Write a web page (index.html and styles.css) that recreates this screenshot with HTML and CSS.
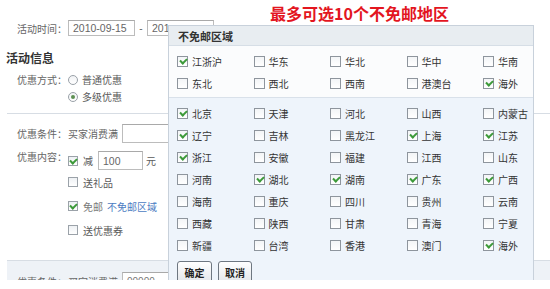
FILE: index.html
```html
<!DOCTYPE html>
<html lang="zh-CN">
<head>
<meta charset="utf-8">
<title>不免邮区域</title>
<link rel="stylesheet" href="styles.css">
</head>
<body>
<div class="shot">
  <div class="form">
    <div class="row date-row">
      <span class="label">活动时间：</span>
      <span class="input date">2010-09-15</span>
      <span class="dash">-</span>
      <span class="input date date-end">201</span>
    </div>
    <h3 class="title">活动信息</h3>
    <div class="row type-row">
      <span class="label">优惠方式：</span>
      <div class="options">
        <div class="opt"><span class="radio"></span>普通优惠</div>
        <div class="opt"><span class="radio on"></span>多级优惠</div>
      </div>
    </div>
    <div class="level">
      <div class="row cond">
        <span class="label">优惠条件：</span><span class="cond-text">买家消费满</span><span class="input amount"></span>
      </div>
      <div class="row content">
        <span class="label">优惠内容：</span>
        <div class="options">
          <div class="opt first"><span class="cb on"></span>减<span class="input small">100</span>元</div>
          <div class="opt"><span class="cb"></span>送礼品</div>
          <div class="opt"><span class="cb on"></span><span class="muted">免邮</span><a class="link">不免邮区域</a></div>
          <div class="opt"><span class="cb"></span>送优惠券</div>
        </div>
      </div>
    </div>
    <div class="level level2">
      <div class="row cond">
        <span class="label">优惠条件：</span><span class="cond-text">买家消费满</span><span class="input amount">00000</span>
      </div>
    </div>
  </div>

  <div class="note">最多可选10个不免邮地区</div>

  <div class="panel">
    <div class="panel-head">不免邮区域</div>
    <div class="grid areas">
      <label class="item"><span class="box on"></span>江浙沪</label>
      <label class="item"><span class="box"></span>华东</label>
      <label class="item"><span class="box"></span>华北</label>
      <label class="item"><span class="box"></span>华中</label>
      <label class="item"><span class="box"></span>华南</label>
      <label class="item"><span class="box"></span>东北</label>
      <label class="item"><span class="box"></span>西北</label>
      <label class="item"><span class="box"></span>西南</label>
      <label class="item"><span class="box"></span>港澳台</label>
      <label class="item"><span class="box on"></span>海外</label>
    </div>
    <div class="provinces">
      <div class="grid">
        <label class="item"><span class="box on"></span>北京</label>
        <label class="item"><span class="box"></span>天津</label>
        <label class="item"><span class="box"></span>河北</label>
        <label class="item"><span class="box"></span>山西</label>
        <label class="item"><span class="box"></span>内蒙古</label>
        <label class="item"><span class="box on"></span>辽宁</label>
        <label class="item"><span class="box"></span>吉林</label>
        <label class="item"><span class="box"></span>黑龙江</label>
        <label class="item"><span class="box on"></span>上海</label>
        <label class="item"><span class="box on"></span>江苏</label>
        <label class="item"><span class="box on"></span>浙江</label>
        <label class="item"><span class="box"></span>安徽</label>
        <label class="item"><span class="box"></span>福建</label>
        <label class="item"><span class="box"></span>江西</label>
        <label class="item"><span class="box"></span>山东</label>
        <label class="item"><span class="box"></span>河南</label>
        <label class="item"><span class="box on"></span>湖北</label>
        <label class="item"><span class="box on"></span>湖南</label>
        <label class="item"><span class="box on"></span>广东</label>
        <label class="item"><span class="box on"></span>广西</label>
        <label class="item"><span class="box"></span>海南</label>
        <label class="item"><span class="box"></span>重庆</label>
        <label class="item"><span class="box"></span>四川</label>
        <label class="item"><span class="box"></span>贵州</label>
        <label class="item"><span class="box"></span>云南</label>
        <label class="item"><span class="box"></span>西藏</label>
        <label class="item"><span class="box"></span>陕西</label>
        <label class="item"><span class="box"></span>甘肃</label>
        <label class="item"><span class="box"></span>青海</label>
        <label class="item"><span class="box"></span>宁夏</label>
        <label class="item"><span class="box"></span>新疆</label>
        <label class="item"><span class="box"></span>台湾</label>
        <label class="item"><span class="box"></span>香港</label>
        <label class="item"><span class="box"></span>澳门</label>
        <label class="item"><span class="box on"></span>海外</label>
      </div>
      <div class="actions">
        <button class="btn ok">确定</button>
        <button class="btn cancel">取消</button>
      </div>
    </div>
  </div>
</div>
</body>
</html>
```

FILE: styles.css
```css
* {
  box-sizing: border-box;
  margin: 0;
  padding: 0;
}

html, body {
  background: #fff;
}

body {
  width: 550px;
  height: 289px;
  overflow: hidden;
  font-family: "Noto Sans CJK SC", "Noto Sans", sans-serif;
  font-size: 10px;
  color: #5a5a5a;
}

.shot {
  position: relative;
  height: 280px;
  overflow: hidden;
}

/* ---------- left form ---------- */
.form {
  padding-top: 20px;
}

.row {
  display: flex;
  align-items: center;
}

.label {
  flex: none;
  width: 68px;
  padding-left: 17px;
  white-space: nowrap;
  color: #666;
}

.input {
  display: inline-flex;
  align-items: center;
  flex: none;
  border: 1px solid #bcbcbc;
  border-top-color: #a9a9a9;
  background: #fff;
  font-family: "Liberation Sans", Arial, sans-serif;
  color: #666;
  padding-left: 4px;
}

.date-row {
  height: 16px;
}

.date {
  width: 67px;
  height: 16px;
  font-size: 10.5px;
}

.date-end {
  width: 67px;
}

.dash {
  width: 12px;
  text-align: center;
  font-family: "Liberation Sans", Arial, sans-serif;
  color: #666;
}

.title {
  margin-top: 14px;
  padding-left: 6px;
  font-size: 12px;
  line-height: 16px;
  font-weight: bold;
  color: #333;
}

.type-row {
  align-items: flex-start;
  margin-top: 5px;
}

.type-row .label {
  line-height: 17px;
}

.options {
  display: flex;
  flex-direction: column;
}

.opt {
  display: flex;
  align-items: center;
  height: 17px;
  white-space: nowrap;
  color: #5a5a5a;
}

.radio {
  position: relative;
  width: 10px;
  height: 10px;
  margin-right: 4px;
  border: 1px solid #9aa1a8;
  border-radius: 50%;
  background: linear-gradient(#f1f3f5, #fff);
}

.radio.on::after {
  content: "";
  position: absolute;
  left: 2px;
  top: 2px;
  width: 4px;
  height: 4px;
  border-radius: 50%;
  background: #5d8f52;
}

.level {
  margin-top: 8px;
  margin-left: 7px;
  border-top: 1px solid #d7dde4;
  padding: 10px 0 18px;
}

.level .label {
  width: 61px;
  padding-left: 10px;
}

.cond {
  height: 19px;
}

.cond-text {
  width: 54px;
  white-space: nowrap;
  color: #666;
}

.amount {
  width: 110px;
  height: 19px;
  font-size: 10px;
  color: #777;
}

.content {
  align-items: flex-start;
  margin-top: 8px;
}

.content .label {
  line-height: 12px;
}

.content .opt {
  height: 24px;
}

.content .opt.first {
  height: 19px;
}

.cb {
  position: relative;
  flex: none;
  width: 10px;
  height: 10px;
  margin-right: 5px;
  border: 1px solid #9ba2a9;
  background: linear-gradient(#eef1f4, #fff);
}

.cb.on::after,
.box.on::after {
  content: "";
  position: absolute;
  left: 2px;
  top: 0;
  width: 3px;
  height: 5px;
  border-right: 2px solid #3d9a3a;
  border-bottom: 2px solid #3d9a3a;
  transform: rotate(45deg);
}

.small {
  width: 45px;
  height: 19px;
  margin: 0 3px 0 5px;
  font-size: 10.5px;
}

.muted {
  color: #7a7a7a;
  margin-right: 4px;
}

.link {
  color: #4c7cc2;
}

.level2 {
  margin-top: 0;
  padding: 11px 0 10px;
  background: #eef2f7;
}

/* ---------- red note ---------- */
.note {
  position: absolute;
  z-index: 2;
  left: 270px;
  top: 4px;
  font-size: 16px;
  line-height: 18px;
  font-weight: bold;
  color: #e3161f;
  white-space: nowrap;
}

/* ---------- popup panel ---------- */
.panel {
  position: absolute;
  z-index: 3;
  left: 168px;
  top: 25px;
  width: 366px;
  height: 270px;
  border: 1px solid #c8d1db;
  background: #eef4fb;
  color: #333;
}

.panel-head {
  height: 20px;
  line-height: 20px;
  padding-left: 9px;
  font-size: 11px;
  font-weight: bold;
  color: #333;
  background: #e8edf1;
  border-bottom: 1px solid #d6dee6;
}

.grid {
  display: grid;
  grid-template-columns: repeat(5, 76.5px);
  grid-auto-rows: 22px;
}

.areas {
  padding: 4px 0 3px 8px;
  background: #fbfcfd;
  border-bottom: 1px solid #d9e1ea;
}

.provinces {
  padding: 4px 0 0 8px;
}

.item {
  display: flex;
  align-items: center;
  white-space: nowrap;
  color: #333;
}

.box {
  position: relative;
  flex: none;
  width: 11px;
  height: 11px;
  margin-right: 4px;
  border: 1px solid #8e959d;
  background: linear-gradient(#f3f5f7, #fff);
}

.box.on::after {
  left: 3px;
}

.actions {
  display: flex;
  gap: 6px;
  margin-top: 5px;
}

.btn {
  height: 22px;
  border: 1px solid #6e7781;
  border-radius: 3px;
  background: linear-gradient(#ffffff, #e3e6ea);
  font-family: "Noto Sans CJK SC", sans-serif;
  font-size: 10px;
  font-weight: bold;
  color: #222;
}

.ok {
  width: 35px;
}

.cancel {
  width: 34px;
}
```
